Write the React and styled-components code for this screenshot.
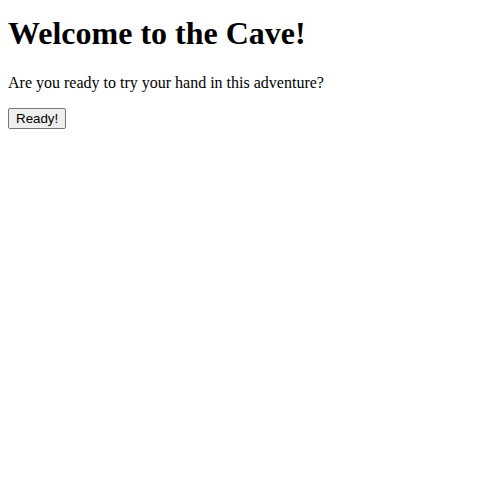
import React from "react";
import styled, { createGlobalStyle } from "styled-components";

const GlobalStyle = createGlobalStyle`
  body {
    margin: 8px;
    font-family: "Liberation Serif", "Times New Roman", serif;
    font-size: 16px;
    color: #000;
    background: #fff;
  }
`;

const Title = styled.h1`
  font-size: 32px;
  font-weight: bold;
  margin: 7.44px 0 21.44px;
`;

const Intro = styled.p`
  margin: 16px 0;
`;

const ReadyButton = styled.button`
  font-family: "Liberation Sans", Arial, sans-serif;
  font-size: 13.333px;
  color: #000;
  background: #efefef;
  border: 1px solid #767676;
  border-radius: 2px;
  padding: 2px 7px;
  cursor: pointer;
`;

const App = () => {
  return (
    <>
      <GlobalStyle />
      <Title>Welcome to the Cave!</Title>
      <Intro>Are you ready to try your hand in this adventure?</Intro>
      <ReadyButton>Ready!</ReadyButton>
    </>
  );
};

export default App;
